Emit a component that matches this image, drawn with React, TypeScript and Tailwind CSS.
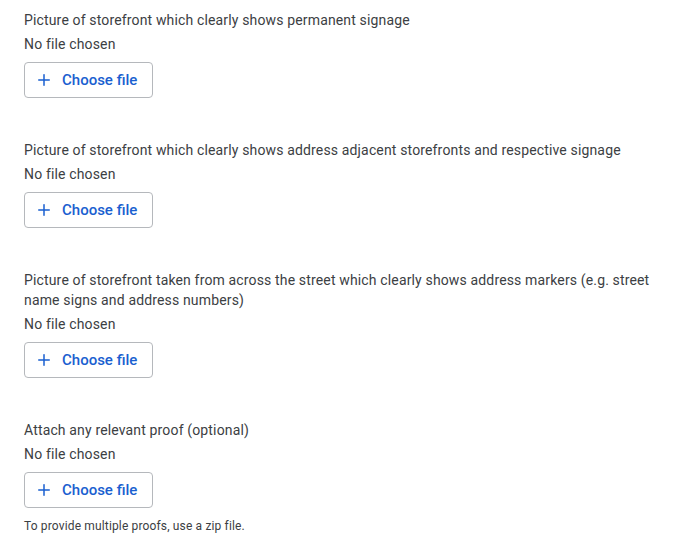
import { Plus } from "lucide-react";

const sections = [
  { label: "Picture of storefront which clearly shows permanent signage" },
  { label: "Picture of storefront which clearly shows address adjacent storefronts and respective signage" },
  {
    label:
      "Picture of storefront taken from across the street which clearly shows address markers (e.g. street name signs and address numbers)",
  },
  { label: "Attach any relevant proof (optional)", hint: "To provide multiple proofs, use a zip file." },
];

export default function App() {
  return (
    <div className="min-h-[551px] bg-white pl-6 pr-6 pt-[10px] font-['Roboto',sans-serif] text-[14px] tracking-[0.15px] text-[#3c4043]">
      <div className="flex flex-col gap-[42px]">
        {sections.map((s, i) => (
          <div key={i} className="flex flex-col">
            <div className="leading-[20px]">{s.label}</div>
            <div className="mt-1 leading-[20px]">No file chosen</div>
            <button className="mt-2 flex h-[36px] w-[129px] items-center gap-[9px] rounded-[4px] border border-[#b5b8bc] pl-[10px] text-[15px] font-medium tracking-normal text-[#1a5fd0]">
              <Plus size={18} strokeWidth={2} className="text-[#1a5fd0]" />
              <span>Choose file</span>
            </button>
            {s.hint && <div className="mt-[10px] text-[12px] leading-[16px] text-[#3c4043]">{s.hint}</div>}
          </div>
        ))}
      </div>
    </div>
  );
}
